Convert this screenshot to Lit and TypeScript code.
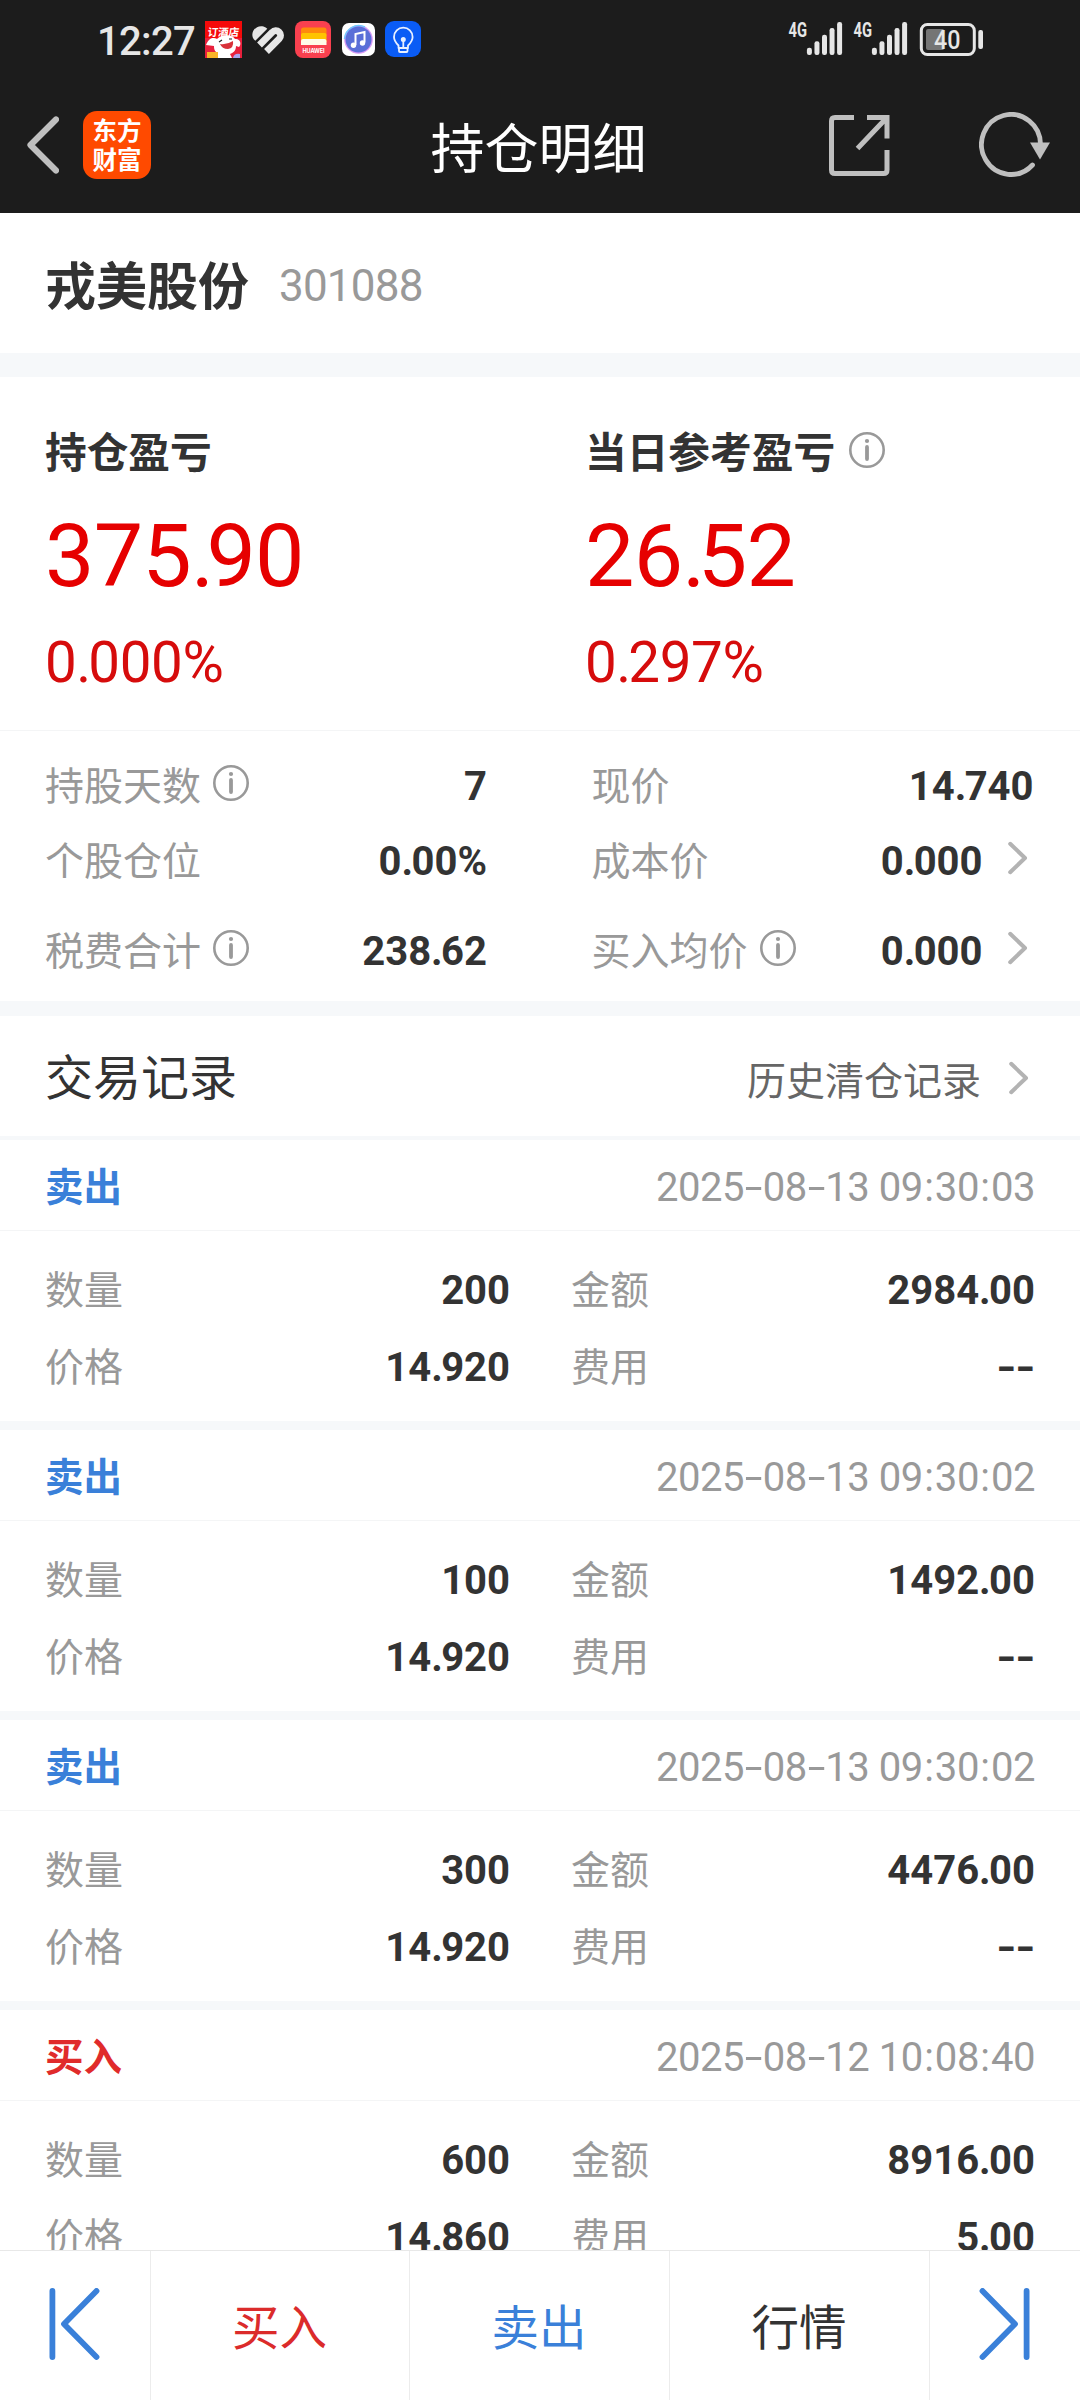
import { LitElement, html, css, svg } from "lit";
import { customElement, property } from "lit/decorators.js";

interface Trade {
  side: "buy" | "sell";
  time: string;
  qty: string;
  amount: string;
  price: string;
  fee: string;
}

const TRADES: Trade[] = [
  { side: "sell", time: "2025-08-13 09:30:03", qty: "200", amount: "2984.00", price: "14.920", fee: "--" },
  { side: "sell", time: "2025-08-13 09:30:02", qty: "100", amount: "1492.00", price: "14.920", fee: "--" },
  { side: "sell", time: "2025-08-13 09:30:02", qty: "300", amount: "4476.00", price: "14.920", fee: "--" },
  { side: "buy", time: "2025-08-12 10:08:40", qty: "600", amount: "8916.00", price: "14.860", fee: "5.00" },
];

/* Number text whose dots, hyphens and colons carry their own spacing. */
@customElement("num-text")
class NumText extends LitElement {
  @property() value = "";
  static styles = css`
    :host { display: inline-block; white-space: pre; }
    .dot { margin-right: var(--dot-gap, -0.04em); }
    .dash { display: inline-block; width: var(--dash-width, 0.47em); text-align: center; transform: scaleX(var(--dash-scale, 1.3)); }
    .colon { margin: 0 0.035em; }
  `;
  render() {
    return [...this.value].map((c) =>
      c === "." ? html`<span class="dot">.</span>`
      : c === "-" ? html`<span class="dash">-</span>`
      : c === ":" ? html`<span class="colon">:</span>`
      : c);
  }
}

@customElement("info-icon")
class InfoIcon extends LitElement {
  static styles = css`
    :host { display: block; width: 36px; height: 36px; margin-bottom: 8px; }
    svg { display: block; }
  `;
  render() {
    return html`<svg width="36" height="36" viewBox="0 0 36 36">
      <circle cx="18" cy="18" r="16.7" fill="none" stroke="#999" stroke-width="2.6"/>
      <circle cx="18" cy="9" r="2.1" fill="#999"/>
      <path d="M18 15V27" stroke="#999" stroke-width="3.8" stroke-linecap="round"/>
    </svg>`;
  }
}

@customElement("chevron-icon")
class ChevronIcon extends LitElement {
  static styles = css`
    :host { display: block; width: 20px; height: 34px; margin: 0 6px 7px 0; }
    svg { display: block; }
  `;
  render() {
    return html`<svg width="20" height="34" viewBox="0 0 20 34">
      <path d="M2.2 2.8L17 17L2.2 31.2" fill="none" stroke="#b3b3b3" stroke-width="4" stroke-linecap="round" stroke-linejoin="round"/>
    </svg>`;
  }
}

@customElement("status-bar")
class StatusBar extends LitElement {
  static styles = css`
    :host { display: flex; height: 80px; padding: 0 96px 0 97px; justify-content: space-between; color: #e6e6e6; }
    .left, .right { display: flex; align-items: center; height: 78px; }
    .time { font-size: 40px; width: 108px; letter-spacing: -0.7px; line-height: 48px; margin-top: 5px; font-weight: 500; }
    svg { display: block; }
    .g { font: 700 20px "Roboto", sans-serif; }
    .bat { font: 500 25px "Roboto", sans-serif; }
    .hotel { font: 700 10.5px "Noto Sans CJK SC", sans-serif; }
    .hw { font: 700 5.6px "Inter", sans-serif; }
  `;
  private signal(x: number) {
    const tops = [47.7, 41.3, 34.7, 28, 22];
    return svg`
      <text class="g" x="${x}" y="36.5" textLength="18.5" lengthAdjust="spacingAndGlyphs" fill="#e6e6e6">4G</text>
      ${tops.map((t, i) => svg`<rect x="${x + 18.4 + i * 7.55}" y="${t}" width="5" height="${55 - t}" rx="2.2" fill="#e6e6e6"/>`)}`;
  }
  render() {
    return html`
      <div class="left">
        <span class="time">12:27</span>
        <svg width="220" height="78" viewBox="205 0 220 78">
          <svg x="205" y="21" width="37" height="37" viewBox="0 0 37 37">
            <rect width="37" height="37" fill="#e8203c"/>
            <rect width="37" height="17" fill="#f50a0a"/>
            <path d="M1 24C4 16 9 16 12 18C17 13 27 13 30 18C35 17 37 23 34 26L31 25C31 30 28 32 25 33L27 37H12L11 31C9 29 9 27 9 25Z" fill="#fff"/>
            <path d="M15 23Q22 24 28 20Q29 27 23 28Q17 28 15 23Z" fill="#d8323a"/>
            <path d="M14 21L17 19M24 18L27 18" stroke="#222" stroke-width="1.2"/>
            <rect x="2" y="31" width="11" height="6" fill="#f9b428"/>
            <path d="M28 37Q29 32 35 33V37Z" fill="#a9a4ef"/>
            <text class="hotel" x="2.5" y="15.5" fill="#fff" transform="skewX(-6) translate(1.5 0)">订酒店</text>
          </svg>
          <g stroke="#e6e6e6" stroke-width="6.8" fill="none">
            <path d="M252.800 37.500C250.500 31 257 24.500 263.500 26.500Q266 27.200 267.300 28.700L255.300 40.700Q253.500 39.500 252.800 37.500Z" fill="#e6e6e6" stroke="none"/>
            <path d="M259.500 45L272.300 32.200A4.750 4.750 0 0 1 279.300 38.700L266.500 51.500"/>
          </g>
          <g>
            <rect x="295" y="21" width="36" height="37" rx="8" fill="#f9404f"/>
            <path d="M301 30Q301 27.500 303.500 27.500H324Q326.500 27.500 326.500 30V36H301Z" fill="#ff8a0c"/>
            <path d="M301 35Q301 33 303 33H324.500Q326.500 33 326.500 35V42H301Z" fill="#ffc400"/>
            <path d="M301 41Q301 39 303 39H324.500Q326.500 39 326.500 41V45H301Z" fill="#fffbe8"/>
            <text class="hw" x="302.500" y="53.300" textLength="22" fill="#fff">HUAWEI</text>
          </g>
          <g>
            <rect x="342" y="23" width="33" height="33" rx="7" fill="#fff"/>
            <circle cx="358.500" cy="39.500" r="14.300" fill="#d89af5"/>
            <path d="M344.500 39A14.300 14.300 0 0 1 365 27" stroke="#6ecbff" stroke-width="1.500" fill="none"/>
            <circle cx="358.500" cy="39.500" r="13" fill="#5a6fd8"/>
            <path d="M355.500 45V34L364.500 32V42.500" fill="none" stroke="#fff" stroke-width="2"/>
            <circle cx="353.500" cy="45.300" r="2.700" fill="#fff"/>
            <circle cx="362.500" cy="43" r="2.700" fill="#fff"/>
          </g>
          <g fill="none" stroke="#e8f0ff" stroke-width="1.800" stroke-linecap="round" stroke-linejoin="round">
            <rect x="385" y="21" width="36" height="36" rx="9" fill="#0a5cf5" stroke="none"/>
            <path d="M398.500 48V45.500C396 43 394 41 394 37A9.300 9.300 0 0 1 412.600 37C412.600 41 410.500 43 408 45.500V48Z"/>
            <path d="M399 48.500V51Q399 52 400 52H406.500Q407.500 52 407.500 51V48.500M403.300 48V41"/>
            <circle cx="403.300" cy="39.600" r="1.600" fill="#e8f0ff"/>
          </g>
        </svg>
      </div>
      <div class="right">
        <svg width="196" height="78" viewBox="788 0 196 78">
          ${this.signal(788.5)}${this.signal(853.5)}
          <rect x="921.300" y="24.500" width="53" height="30" rx="6" fill="none" stroke="#e6e6e6" stroke-width="3"/>
          <path d="M928 29H943.500V50H928Q926 50 926 48V31Q926 29 928 29Z" fill="#757575"/>
          <text class="bat" x="934" y="49" textLength="26.500" lengthAdjust="spacingAndGlyphs" fill="#e6e6e6">40</text>
          <rect x="978.300" y="30" width="4.700" height="19" rx="2" fill="#e6e6e6"/>
        </svg>
      </div>`;
  }
}

@customElement("nav-bar")
class NavBar extends LitElement {
  static styles = css`
    :host { display: grid; grid-template-columns: 1fr auto 1fr; height: 133px; padding: 0 29px 3px 26px; align-items: center; box-sizing: border-box; }
    .left { display: flex; align-items: center; gap: 24px; }
    .logo { width: 68px; height: 68px; border-radius: 14px; background: #ff4a00; color: #fff; box-sizing: border-box;
      font: 700 24.500px/29px "Noto Sans CJK SC", sans-serif; text-align: center; padding-top: 4px; }
    .title { font-size: 54px; line-height: 64px; color: #fff; padding-top: 12px; }
    .right { display: flex; justify-content: flex-end; align-items: center; gap: 89px; }
    svg { display: block; }
  `;
  render() {
    return html`
      <div class="left">
        <svg width="33" height="58" viewBox="0 0 33 58">
          <path d="M30 3.500L4.500 29L30 54.500" fill="none" stroke="#bfbfbf" stroke-width="6.200" stroke-linecap="round" stroke-linejoin="round"/>
        </svg>
        <div class="logo">东方<br>财富</div>
      </div>
      <div class="title">持仓明细</div>
      <div class="right">
        <svg width="61" height="61" viewBox="0 0 61 61" fill="none" stroke="#bfbfbf" stroke-width="5">
          <path d="M25 2.500H6Q2.500 2.500 2.500 6V55Q2.500 58.500 6 58.500H54.500Q58 58.500 58 55V35"/>
          <path d="M38 2.500H58V23.500M57 3.500L28.500 33.500"/>
        </svg>
        <svg width="72" height="66" viewBox="0 0 72 66">
          <path d="M61.500 33A29.500 30 0 1 0 53.500 53" fill="none" stroke="#bfbfbf" stroke-width="4.800" stroke-linecap="round"/>
          <path d="M51 30.500H71L61 47.500Z" fill="#bfbfbf"/>
        </svg>
      </div>`;
  }
}

@customElement("trade-card")
class TradeCard extends LitElement {
  @property({ attribute: false }) trade!: Trade;
  static styles = css`
    :host { display: block; height: 281px; border-bottom: 9px solid #f6f8fa; }
    .head { display: flex; justify-content: space-between; align-items: center; height: 91px; box-sizing: border-box;
      padding: 5px 45px 0; border-bottom: 1px solid #f4f5f6; }
    .side { font-weight: 700; font-size: 38.500px; padding-top: 2px; }
    .sell { color: #3a80d9; }
    .buy { color: #e02b2b; }
    .time { color: #999; font-size: 40px; letter-spacing: -0.450px; --dash-width: 18.500px; --dash-scale: 1.600; }
    .body { display: grid; grid-template-columns: 465px 464px; column-gap: 61px; grid-auto-rows: 77px; padding: 21px 45px 15px; }
    .cell { display: flex; align-items: center; justify-content: space-between; color: #999; font-size: 39px; }
    .label { padding-top: 2px; }
    .value { font-weight: 700; font-size: 40px; color: #333; }
  `;
  private cell(label: string, value: string) {
    return html`<div class="cell"><span class="label">${label}</span><num-text class="value" .value=${value}></num-text></div>`;
  }
  render() {
    const t = this.trade;
    return html`
      <div class="head">
        <span class="side ${t.side}">${t.side === "sell" ? "卖出" : "买入"}</span>
        <num-text class="time" .value=${t.time}></num-text>
      </div>
      <div class="body">
        ${this.cell("数量", t.qty)}${this.cell("金额", t.amount)}
        ${this.cell("价格", t.price)}${this.cell("费用", t.fee)}
      </div>`;
  }
}

@customElement("tab-bar")
class TabBar extends LitElement {
  static styles = css`
    :host { display: grid; grid-template-columns: 151px 259px 260px 260px 150px; height: 150px; box-sizing: border-box;
      border-top: 1px solid #e8e8e8; background: #fff; }
    .tab { display: flex; align-items: center; justify-content: center; font-size: 47.500px; line-height: 56px;
      border-right: 1px solid #ececec; padding-top: 7px; padding-right: 1px; box-sizing: border-box; }
    .tab:last-child { border-right: 0; }
    .icon { padding-top: 0; padding-bottom: 3px; }
    .buy { color: #db2b2b; }
    .sell { color: #3a80d9; }
    .quote { color: #333; }
    svg { display: block; }
  `;
  render() {
    return html`
      <div class="tab icon"><svg width="51" height="72" viewBox="0 0 51 72">
        <path d="M3.400 3V69M47.500 3L15 36L47.500 69" fill="none" stroke="#3a80d9" stroke-width="5.800" stroke-linecap="round" stroke-linejoin="round"/></svg></div>
      <div class="tab buy">买入</div>
      <div class="tab sell">卖出</div>
      <div class="tab quote">行情</div>
      <div class="tab icon"><svg width="51" height="72" viewBox="0 0 51 72">
        <path d="M47.600 3V69M3.500 3L36 36L3.500 69" fill="none" stroke="#3a80d9" stroke-width="5.800" stroke-linecap="round" stroke-linejoin="round"/></svg></div>`;
  }
}

@customElement("app-root")
class AppRoot extends LitElement {
  static styles = css`
    :host { display: flex; flex-direction: column; width: 1080px; height: 2400px; overflow: hidden; background: #fff;
      font-family: "Roboto", "Noto Sans CJK SC", sans-serif; color: #333; line-height: 1.200; }
    header { background: #1c1c1c; height: 213px; flex: none; }
    main { flex: 1; min-height: 0; overflow: hidden; }
    .band { background: #f6f8fa; }
    .band.large { height: 24px; }
    .band.medium { height: 15px; }
    .band.small { height: 4px; }
    .stock { display: flex; align-items: center; height: 140px; box-sizing: border-box; padding: 6px 45px 0; gap: 30px; }
    .name { font-size: 51px; font-weight: 700; padding-top: 3px; }
    .code { font-size: 44px; color: #999; letter-spacing: -0.800px; }
    .summary { display: grid; grid-template-columns: 540px 1fr; height: 354px; box-sizing: border-box; padding: 51px 0 0 45px;
      border-bottom: 1px solid #f4f5f6; }
    .heading { display: flex; align-items: center; gap: 14px; font-size: 41.700px; font-weight: 700; height: 53px; }
    .heading info-icon { margin-bottom: 10px; }
    .profit { font-size: 88px; line-height: 104px; color: #e60000; letter-spacing: -0.800px; margin-top: 23px; --dot-gap: -7px; }
    .rate { font-size: 56.500px; line-height: 66px; color: #d60c0c; letter-spacing: -0.400px; margin-top: 22px; --dot-gap: -2.500px; }
    .profit, .rate { display: block; }
    .details { display: grid; grid-template-columns: 442px 442px; column-gap: 104.500px; grid-template-rows: 75px 75px 105px;
      height: 270px; box-sizing: border-box; padding: 18px 45px 0; }
    .item { display: flex; align-items: center; font-size: 39px; color: #999; }
    .label { padding-top: 1px; }
    .item info-icon { margin-left: 12px; }
    .item .value { margin-left: auto; font-size: 40px; font-weight: 700; color: #333; }
    .item chevron-icon { margin-left: 25px; }
    .records { display: flex; align-items: center; justify-content: space-between; height: 120px; box-sizing: border-box; padding: 6px 45px 0; }
    .records .title { font-size: 48px; }
    .history { display: flex; align-items: center; gap: 28px; font-size: 39px; color: #666; padding-top: 6px; }
    tab-bar { flex: none; }
  `;
  private item(label: string, value: string, info = false, link = false) {
    return html`<div class="item"><span class="label">${label}</span>${info ? html`<info-icon></info-icon>` : ""}
      <num-text class="value" .value=${value}></num-text>${link ? html`<chevron-icon></chevron-icon>` : ""}</div>`;
  }
  render() {
    return html`
      <header><status-bar></status-bar><nav-bar></nav-bar></header>
      <main>
        <section class="stock"><span class="name">戎美股份</span><span class="code">301088</span></section>
        <div class="band large"></div>
        <section class="summary">
          <div>
            <div class="heading">持仓盈亏</div>
            <num-text class="profit" .value=${"375.90"}></num-text>
            <num-text class="rate" .value=${"0.000%"}></num-text>
          </div>
          <div>
            <div class="heading"><span>当日参考盈亏</span><info-icon></info-icon></div>
            <num-text class="profit" .value=${"26.52"}></num-text>
            <num-text class="rate" .value=${"0.297%"}></num-text>
          </div>
        </section>
        <section class="details">
          ${this.item("持股天数", "7", true)}${this.item("现价", "14.740")}
          ${this.item("个股仓位", "0.00%")}${this.item("成本价", "0.000", false, true)}
          ${this.item("税费合计", "238.62", true)}${this.item("买入均价", "0.000", true, true)}
        </section>
        <div class="band medium"></div>
        <section class="records">
          <span class="title">交易记录</span>
          <span class="history">历史清仓记录<chevron-icon></chevron-icon></span>
        </section>
        <div class="band small"></div>
        ${TRADES.map((t) => html`<trade-card .trade=${t}></trade-card>`)}
      </main>
      <tab-bar></tab-bar>`;
  }
}
